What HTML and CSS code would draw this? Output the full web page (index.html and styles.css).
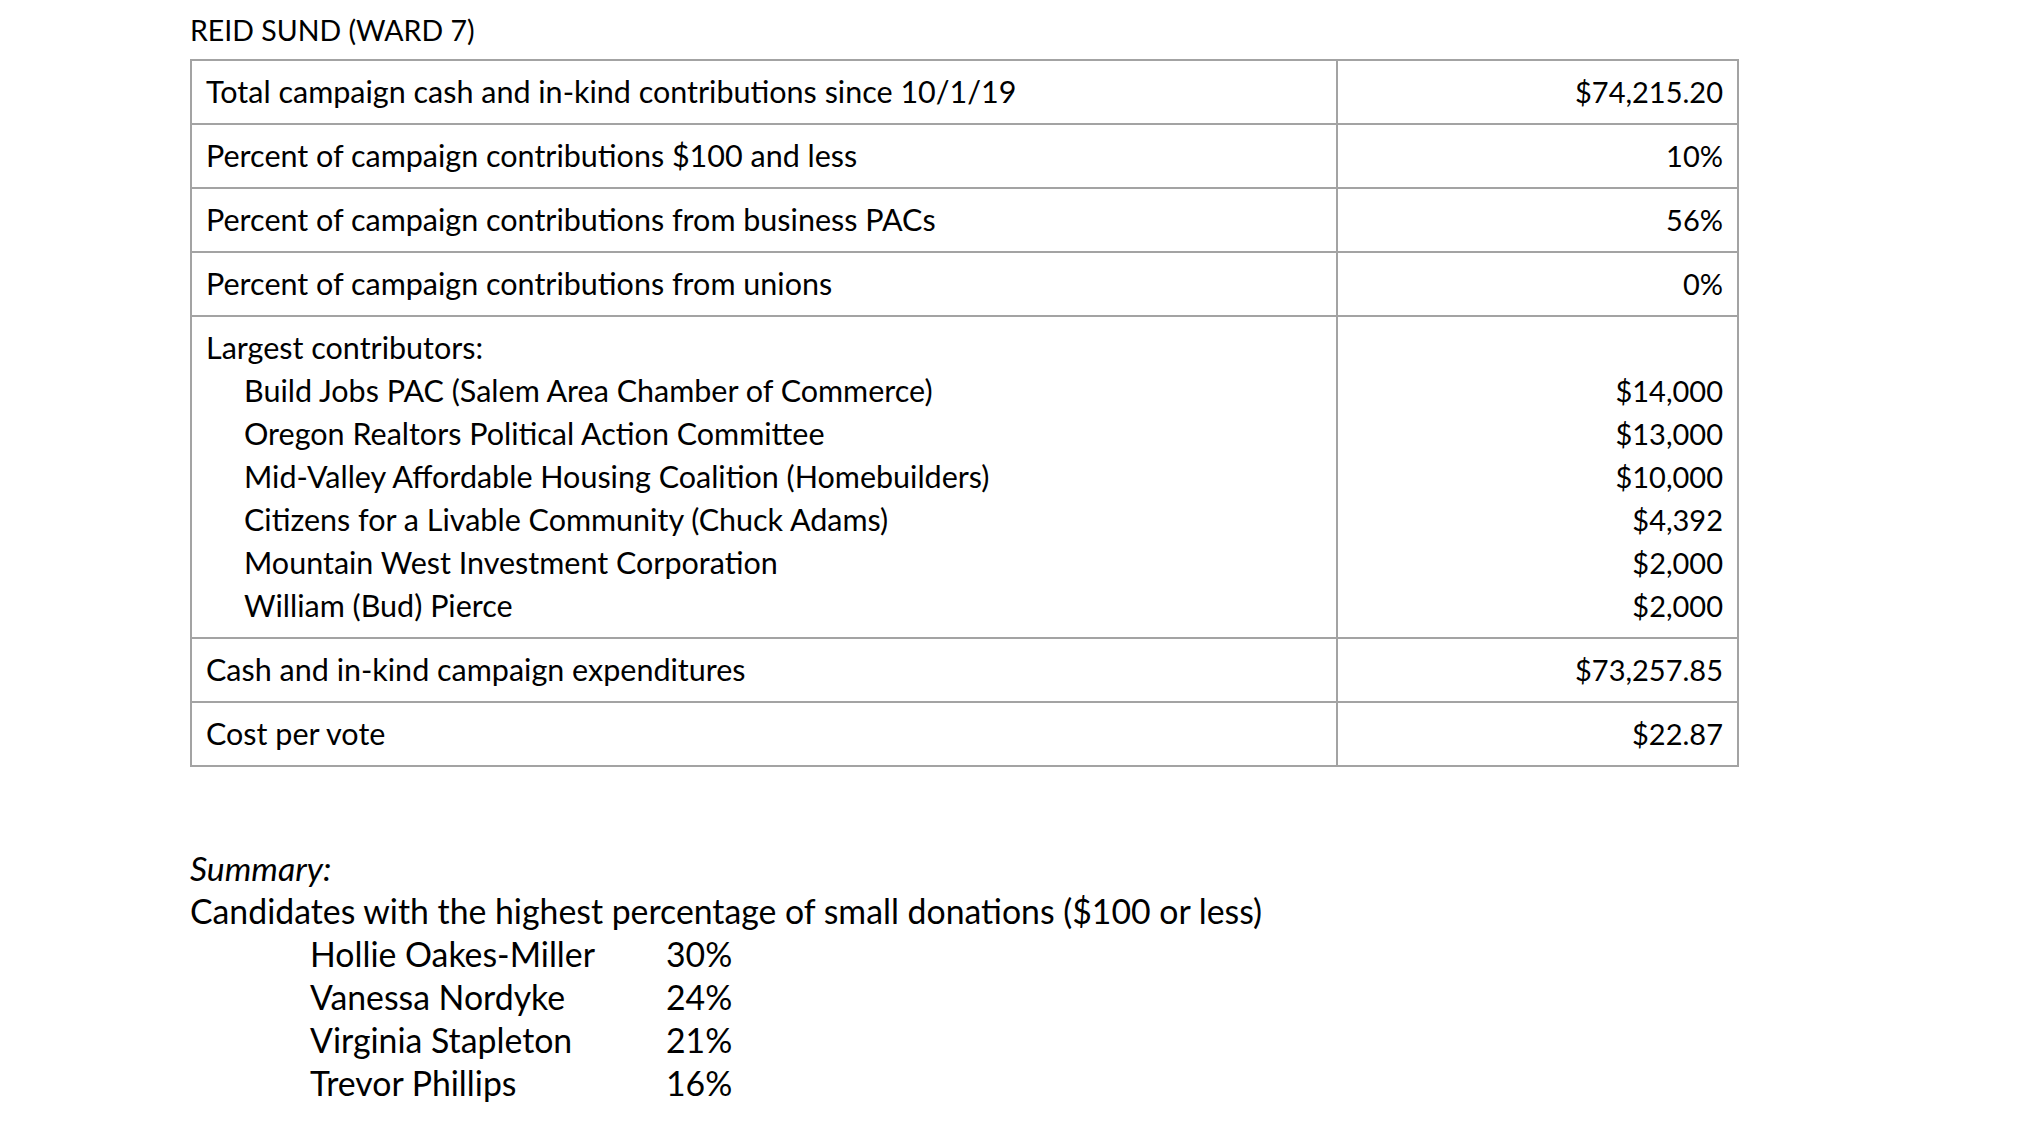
FILE: index.html
```html
<!DOCTYPE html>
<html lang="en">
<head>
<meta charset="utf-8">
<title>Reid Sund (Ward 7)</title>
<link rel="stylesheet" href="styles.css">
</head>
<body>
<div class="page">
  <div class="title">REID SUND (WARD 7)</div>
  <table class="finance">
    <tr>
      <td class="label">Total campaign cash and in-kind contributions since 10/1/19</td>
      <td class="value">$74,215.20</td>
    </tr>
    <tr>
      <td class="label">Percent of campaign contributions $100 and less</td>
      <td class="value">10%</td>
    </tr>
    <tr>
      <td class="label">Percent of campaign contributions from business PACs</td>
      <td class="value">56%</td>
    </tr>
    <tr>
      <td class="label">Percent of campaign contributions from unions</td>
      <td class="value">0%</td>
    </tr>
    <tr>
      <td class="label">
        <div>Largest contributors:</div>
        <div class="indent">Build Jobs PAC (Salem Area Chamber of Commerce)</div>
        <div class="indent">Oregon Realtors Political Action Committee</div>
        <div class="indent">Mid-Valley Affordable Housing Coalition (Homebuilders)</div>
        <div class="indent">Citizens for a Livable Community (Chuck Adams)</div>
        <div class="indent">Mountain West Investment Corporation</div>
        <div class="indent">William (Bud) Pierce</div>
      </td>
      <td class="value">
        <div>&nbsp;</div>
        <div>$14,000</div>
        <div>$13,000</div>
        <div>$10,000</div>
        <div>$4,392</div>
        <div>$2,000</div>
        <div>$2,000</div>
      </td>
    </tr>
    <tr>
      <td class="label">Cash and in-kind campaign expenditures</td>
      <td class="value">$73,257.85</td>
    </tr>
    <tr>
      <td class="label">Cost per vote</td>
      <td class="value">$22.87</td>
    </tr>
  </table>

  <div class="summary">
    <div class="summary-head">Summary:</div>
    <div>Candidates with the highest percentage of small donations ($100 or less)</div>
    <div class="ranking">
      <span>Hollie Oakes-Miller</span><span>30%</span>
      <span>Vanessa Nordyke</span><span>24%</span>
      <span>Virginia Stapleton</span><span>21%</span>
      <span>Trevor Phillips</span><span>16%</span>
    </div>
  </div>
</div>
</body>
</html>
```

FILE: styles.css
```css
html, body {
  margin: 0;
  padding: 0;
  background: #ffffff;
}

body {
  font-family: Lato, "Liberation Sans", sans-serif;
  color: #000000;
}

.page {
  padding: 9px 0 0 190px;
}

.title {
  font-size: 28.5px;
  line-height: 43px;
  margin-bottom: 7px;
}

.finance {
  border-collapse: collapse;
  width: 1549px;
  font-size: 30.5px;
  line-height: 43px;
}

.finance td {
  border: 2px solid #a3a3a3;
  padding: 9px 14px 10px 14px;
  vertical-align: top;
}

.finance .label {
  width: 1116px;
}

.finance .value {
  text-align: right;
  font-size: 29px;
}

.indent {
  padding-left: 38px;
}

.summary {
  margin-top: 80px;
  font-size: 33.8px;
  line-height: 43px;
}

.summary-head {
  font-style: italic;
}

.ranking {
  display: grid;
  grid-template-columns: 356px auto;
  justify-content: start;
  padding-left: 120px;
}
```
